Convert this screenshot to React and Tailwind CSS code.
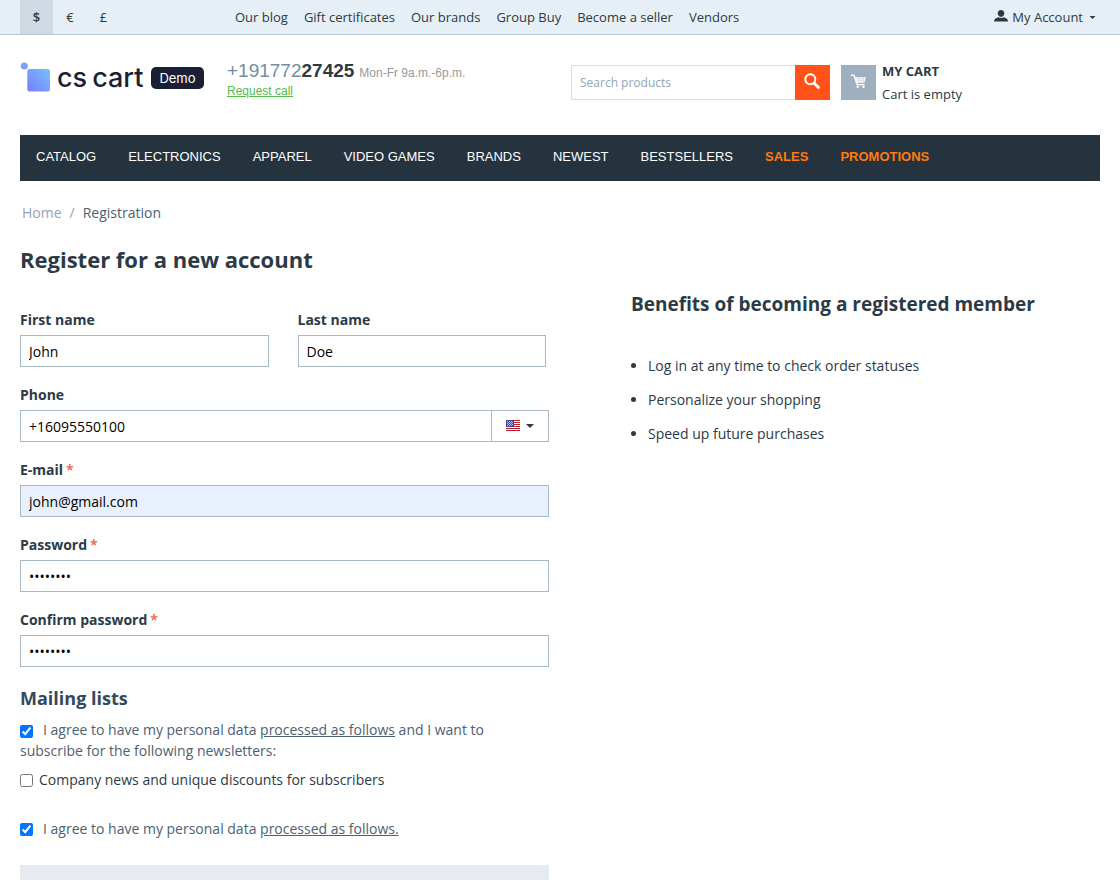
import React from 'react';

const topLinks = ['Our blog', 'Gift certificates', 'Our brands', 'Group Buy', 'Become a seller', 'Vendors'];

const menuItems = [
  { label: 'CATALOG' },
  { label: 'ELECTRONICS' },
  { label: 'APPAREL' },
  { label: 'VIDEO GAMES' },
  { label: 'BRANDS' },
  { label: 'NEWEST' },
  { label: 'BESTSELLERS' },
  { label: 'SALES', accent: true },
  { label: 'PROMOTIONS', accent: true },
];

const benefits = [
  'Log in at any time to check order statuses',
  'Personalize your shopping',
  'Speed up future purchases',
];

const inputClass = 'block h-8 w-full min-w-0 border border-[#a9bac7] px-2 text-sm text-black outline-none';

const Caret = ({ className }) => (
  <svg viewBox="0 0 8 4" className={className} fill="currentColor" aria-hidden="true">
    <path d="M0 0h8L4 4z" />
  </svg>
);

const UserIcon = () => (
  <svg viewBox="0 0 14 12" className="mb-0.5 h-3 w-3.5" fill="currentColor" aria-hidden="true">
    <path d="M7 0C9 0 10.3 1.3 10.3 3.3 10.3 5 9 7 7 7S3.7 5 3.7 3.3C3.7 1.3 5 0 7 0z" />
    <path d="M0 11.5C0 9.3 1.5 8 4.5 7.2 6 8.3 8 8.3 9.5 7.2 12.5 8 14 9.3 14 11.5z" />
  </svg>
);

const SearchIcon = () => (
  <svg viewBox="0 0 16 16" className="h-4 w-4" fill="none" stroke="currentColor" aria-hidden="true">
    <circle cx="6.3" cy="6.3" r="5" strokeWidth="1.900" />
    <path d="M10.2 10.2l4.100 4.100" strokeWidth="3" strokeLinecap="round" />
  </svg>
);

const CartIcon = () => (
  <svg viewBox="0 0 15 14" className="h-3.5 w-[15px]" fill="currentColor" aria-hidden="true">
    <path d="M0 .5h3.4l1 2.700H15l-1.600 5.500H6.200l.4 1.300h7v1.200H5.600L2.500 1.900H0z" />
    <path d="M4.700 4.900h9.800M5.300 6.700h8.700M7.700 3.200v5.500M10.200 3.200v5.500M12.500 3.200v5.500" stroke="#9eb0bf" strokeWidth=".3" />
    <circle cx="6.700" cy="12.700" r="1.200" />
    <circle cx="12.500" cy="12.700" r="1.200" />
  </svg>
);

const Flag = () => (
  <svg viewBox="0 0 14 11" className="mb-px h-[11px] w-3.5" shapeRendering="crispEdges" aria-hidden="true">
    <rect width="14" height="11" fill="#fff" />
    <path d="M0 0h14v1H0zM0 2h14v1H0zM0 4h14v1H0zM0 6h14v1H0zM0 8h14v1H0zM0 10h14v1H0z" fill="#b8202f" />
    <rect width="8" height="7" fill="#3a45a8" />
    <path
      d="M1 1h1v1H1zM3 1h1v1H3zM5 1h1v1H5zM2 2h1v1H2zM4 2h1v1H4zM6 2h1v1H6zM1 3h1v1H1zM3 3h1v1H3zM5 3h1v1H5zM2 4h1v1H2zM4 4h1v1H4zM6 4h1v1H6zM1 5h1v1H1zM3 5h1v1H3zM5 5h1v1H5z"
      fill="#b9bfe8"
    />
  </svg>
);

const Logo = () => (
  <a href="#" className="flex items-center" aria-label="cs cart Demo">
    <svg viewBox="0 0 30 30" className="h-[30px] w-[30px]" aria-hidden="true">
      <defs>
        <linearGradient id="mark" x1="0" y1="1" x2="1" y2="0">
          <stop offset="0" stopColor="#7a7cff" />
          <stop offset="1" stopColor="#74c2fe" />
        </linearGradient>
      </defs>
      <circle cx="4.3" cy="4" r="3.6" fill="#79a4f5" />
      <rect x="7.3" y="7" width="22.7" height="22.5" rx="2.5" fill="url(#mark)" />
    </svg>
    <span className="ml-[7px] flex gap-[5px] pt-0.5 font-[Inter,sans-serif] text-[27px] leading-8 font-medium text-[#1b1f35]">
      <span>cs</span>
      <span>cart</span>
    </span>
    <span className="mt-0.5 ml-2 rounded-[5px] bg-[#1b1f35] px-2 font-[Inter,sans-serif] text-[13px] leading-[22px] text-white">
      Demo
    </span>
  </a>
);

const Field = ({ id, label, required, children }) => (
  <div className="mb-[18px]">
    <label htmlFor={id} className="mb-[5px] block leading-5 font-bold">
      {label}
      {required && <span className="ml-[3px] text-[#ea7162]">*</span>}
    </label>
    {children}
  </div>
);

export default function App() {
  return (
    <div className="flex min-h-screen flex-col bg-white font-['Open_Sans',sans-serif] text-sm text-[#2c3a46]">
      <div className="border-b border-[#b3c8d8] bg-[#e6eff5] px-5 text-[13px]">
        <div className="flex h-[34px] items-center">
          <div className="flex w-[207px] self-stretch">
            <button type="button" className="w-[33px] bg-[#ced9e2] font-semibold">$</button>
            <button type="button" className="w-[34px]">€</button>
            <button type="button" className="w-[33px]">£</button>
          </div>
          <nav className="flex flex-1">
            {topLinks.map((link) => (
              <a key={link} href="#" className="px-2">{link}</a>
            ))}
          </nav>
          <button type="button" className="flex items-center">
            <UserIcon />
            <span className="ml-1">My Account</span>
            <Caret className="mr-1 ml-1.5 h-[3px] w-[7px]" />
          </button>
        </div>
      </div>

      <header className="flex h-[100px] items-start px-5">
        <div className="w-[207px] pt-[25px]">
          <Logo />
        </div>
        <div className="flex-1 pt-6 font-['Liberation_Sans',sans-serif]">
          <div className="leading-[23px]">
            <span className="text-[19px] text-[#748da3]">
              +191772<b className="text-[#2c3a46]">27425</b>
            </span>
            <span className="ml-[5px] text-xs text-[#999]">Mon-Fr 9a.m.-6p.m.</span>
          </div>
          <a href="#" className="block text-xs leading-[14px] text-[#55b948] underline">Request call</a>
        </div>
        <form className="mt-[30px] flex h-[35px] w-[259px]" onSubmit={(e) => e.preventDefault()}>
          <input
            type="text"
            aria-label="Search products"
            placeholder="Search products"
            className="min-w-0 flex-1 border border-r-0 border-[#d8dfe6] px-2 text-xs outline-none placeholder:text-[#93a5b8]"
          />
          <button type="submit" aria-label="Search" className="flex w-[35px] items-center justify-center bg-[#ff5319] pr-px pb-[3px] text-white">
            <SearchIcon />
          </button>
        </form>
        <a href="#" className="mt-[25px] ml-[11px] flex w-[259px] text-[13px]">
          <span className="mt-[5px] flex h-[35px] w-[35px] items-center justify-center bg-[#9eb0bf] pb-[3px] text-white">
            <CartIcon />
          </span>
          <span className="ml-1.5 leading-[23px]">
            <b className="block">MY CART</b>
            Cart is empty
          </span>
        </a>
      </header>

      <nav className="mx-5 flex h-[46px] bg-[#25333e] font-['Liberation_Sans',sans-serif] text-[13px] leading-[43px] text-white">
        {menuItems.map(({ label, accent }) => (
          <a key={label} href="#" className={accent ? 'px-4 font-bold text-[#ff7a0f]' : 'px-4'}>
            {label}
          </a>
        ))}
      </nav>

      <main className="flex flex-1 flex-col px-5">
        <nav className="mt-[22px] flex gap-2 px-0.5 leading-5" aria-label="Breadcrumb">
          <a href="#" className="text-[#93a5b8]">Home</a>
          <span className="text-[#93a5b8]">/</span>
          <span className="text-[#4d6172]">Registration</span>
        </nav>

        <h1 className="mt-5 text-[22px] leading-8 font-bold">Register for a new account</h1>

        <div className="grid flex-1 grid-cols-[529fr_469fr] gap-[82px]">
          <form className="flex flex-col pt-[35px]" onSubmit={(e) => e.preventDefault()}>
            <div className="grid grid-cols-2 gap-[29px] pr-[3px]">
              <Field id="first" label="First name">
                <input id="first" type="text" defaultValue="John" className={inputClass} />
              </Field>
              <Field id="last" label="Last name">
                <input id="last" type="text" defaultValue="Doe" className={inputClass} />
              </Field>
            </div>
            <Field id="phone" label="Phone">
              <div className="flex">
                <input id="phone" type="tel" defaultValue="+16095550100" className={inputClass} />
                <button
                  type="button"
                  aria-label="Country"
                  className="flex w-[57px] shrink-0 items-center justify-center gap-1.5 border border-l-0 border-[#a9bac7]"
                >
                  <Flag />
                  <Caret className="h-1 w-2" />
                </button>
              </div>
            </Field>
            <Field id="email" label="E-mail" required>
              <input id="email" type="email" defaultValue="john@gmail.com" className={`${inputClass} bg-[#e8f0fe]`} />
            </Field>
            <Field id="password" label="Password" required>
              <input id="password" type="password" defaultValue="password" className={inputClass} />
            </Field>
            <Field id="confirm" label="Confirm password" required>
              <input id="confirm" type="password" defaultValue="password" className={inputClass} />
            </Field>

            <h2 className="mt-px text-lg leading-6 font-bold text-[#33495c]">Mailing lists</h2>
            <div className="mt-[9px] pr-10 leading-[21px] text-[#4d6172]">
              <input id="agree-news" type="checkbox" defaultChecked className="mr-2.5 h-[13px] w-[13px] align-[-3px]" />
              <label htmlFor="agree-news">
                I agree to have my personal data <a href="#" className="underline">processed as follows</a> and I want to
                subscribe for the following newsletters:
              </label>
            </div>
            <div className="mt-2 leading-[21px]">
              <input id="news" type="checkbox" className="mr-1.5 h-[13px] w-[13px] align-[-2px]" />
              <label htmlFor="news">Company news and unique discounts for subscribers</label>
            </div>
            <div className="mt-7 leading-[21px] text-[#4d6172]">
              <input id="agree" type="checkbox" defaultChecked className="mr-2.5 h-[13px] w-[13px] align-[-2px]" />
              <label htmlFor="agree">
                I agree to have my personal data <a href="#" className="underline">processed as follows.</a>
              </label>
            </div>
            <div className="mt-[26px] flex-1 bg-[#e6eaf1]" />
          </form>

          <aside className="pt-[17px]">
            <h2 className="text-[19px] leading-6 font-bold">Benefits of becoming a registered member</h2>
            <ul className="mt-[33px] list-disc pl-[17px] leading-[34px]">
              {benefits.map((benefit) => (
                <li key={benefit}>{benefit}</li>
              ))}
            </ul>
          </aside>
        </div>
      </main>
    </div>
  );
}
